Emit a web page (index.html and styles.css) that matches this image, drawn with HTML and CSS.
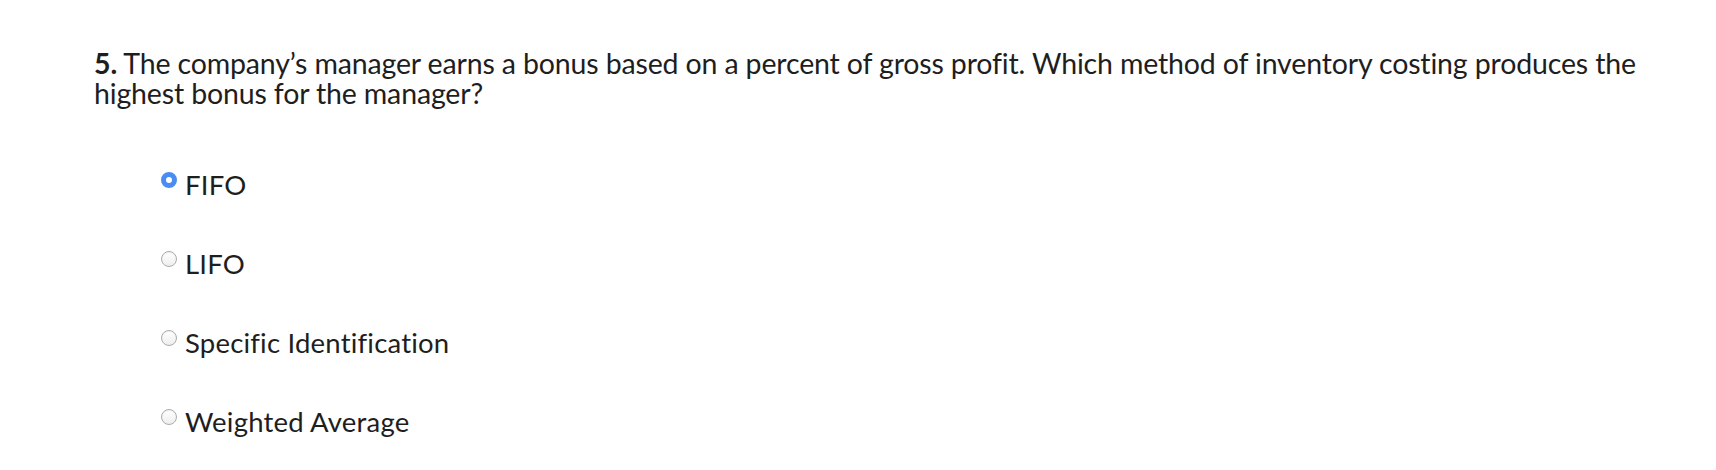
FILE: index.html
```html
<!DOCTYPE html>
<html lang="en">
<head>
<meta charset="utf-8">
<title>Question 5</title>
<link rel="stylesheet" href="styles.css">
</head>
<body>
<div class="question">
  <p class="prompt"><strong>5.</strong> The company’s manager earns a bonus based on a percent of gross profit. Which method of inventory costing produces the highest bonus for the manager?</p>
  <ul class="options">
    <li class="option"><span class="radio checked"></span><span class="label">FIFO</span></li>
    <li class="option"><span class="radio"></span><span class="label">LIFO</span></li>
    <li class="option"><span class="radio"></span><span class="label">Specific Identification</span></li>
    <li class="option"><span class="radio"></span><span class="label">Weighted Average</span></li>
  </ul>
</div>
</body>
</html>
```
FILE: styles.css
```css
html, body {
  margin: 0;
  padding: 0;
  background: #ffffff;
}
body {
  font-family: "Lato", "Liberation Sans", sans-serif;
  font-size: 27.5px;
  line-height: 30px;
  color: #1e1e1e;
  font-variant-ligatures: none;
}
.question {
  padding: 48px 30px 0 94px;
}
.prompt {
  margin: 0;
  font-size: 28.5px;
  line-height: 30px;
  letter-spacing: -0.15px;
}
.prompt strong {
  font-weight: 700;
}
.options {
  list-style: none;
  margin: 62px 0 0 0;
  padding: 0 0 0 67px;
  display: flex;
  flex-direction: column;
  gap: 49px;
}
.option {
  display: flex;
  align-items: flex-start;
  gap: 8px;
}
.radio {
  flex: none;
  box-sizing: border-box;
  width: 16px;
  height: 16px;
  margin-top: 2px;
  border-radius: 50%;
  border: 1px solid #ababab;
  background: linear-gradient(#ffffff, #eeeeee);
  box-shadow: inset 0 1px 1px rgba(0, 0, 0, 0.06);
}
.radio.checked {
  border: 5px solid #4a8cf1;
  background: #ffffff;
  box-shadow: none;
}
.label {
  display: block;
  letter-spacing: 0.2px;
}
```
